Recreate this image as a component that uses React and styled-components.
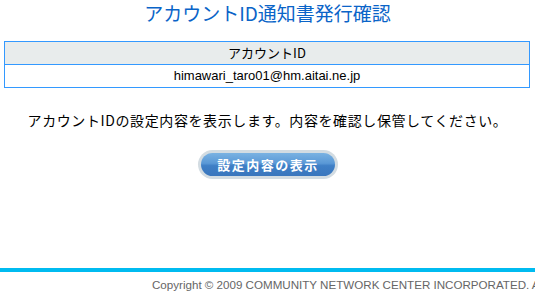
import React from "react";
import styled, { createGlobalStyle } from "styled-components";

const Global = createGlobalStyle`
  html, body { margin: 0; padding: 0; background: #fff; overflow: hidden; }
  body { font-family: "Liberation Sans", "Noto Sans CJK JP", sans-serif; color: #000; }
`;

const Page = styled.div`
  width: 535px;
  height: 299px;
  display: flex;
  flex-direction: column;
  overflow: hidden;
`;

const Title = styled.h1`
  margin: 0;
  padding-top: 1px;
  height: 41px;
  box-sizing: border-box;
  text-align: center;
  font-size: 19px;
  line-height: 24px;
  font-weight: normal;
  color: #0a64c8;
  font-family: "Noto Sans CJK JP", sans-serif;
`;

const InfoTable = styled.table`
  margin: 0 5px 0 4px;
  width: 526px;
  border-collapse: collapse;
  border: 1px solid #3399ff;
  font-size: 13px;
`;

const Cell = styled.td`
  height: 22px;
  padding: 0;
  text-align: center;
  vertical-align: middle;
  border: 1px solid #3399ff;
  background: ${(p) => (p.$head ? "#e8ecec" : "#fff")};
  font-family: ${(p) => (p.$head ? '"Noto Sans CJK JP", sans-serif' : '"Liberation Sans", "Noto Sans CJK JP", sans-serif')};
  line-height: 22px;
`;

const Message = styled.p`
  margin: 22px 0 0;
  text-align: center;
  font-size: 14px;
  letter-spacing: 0.6px;
  line-height: 20px;
  font-family: "Noto Sans CJK JP", sans-serif;
`;

const ButtonRow = styled.div`
  display: flex;
  justify-content: center;
  margin-top: 20px;
  padding-left: 1px;
`;

const Ring = styled.div`
  width: 140px;
  height: 29px;
  box-sizing: border-box;
  border-radius: 15px;
  padding: 3px;
  background: #d3dce2;
  display: flex;
`;

const ShowButton = styled.button`
  flex: 1;
  border: none;
  border-radius: 12px;
  padding: 0;
  background: linear-gradient(#7ab2e2 0%, #5a98d6 45%, #3f7fc6 55%, #3a76bd 100%);
  color: #fff;
  font-weight: bold;
  font-size: 13px;
  letter-spacing: 1.5px;
  font-family: "Noto Sans CJK JP", sans-serif;
  line-height: 23px;
  cursor: pointer;
`;

const Spacer = styled.div`
  flex: 1;
`;

const Footer = styled.footer`
  border-top: 4px solid #00bbf0;
  height: 31px;
  flex-shrink: 0;
  box-sizing: border-box;
  padding: 6px 0 0 152px;
  white-space: nowrap;
  font-size: 11.6px;
  line-height: 14px;
  color: #666;
  font-family: "Liberation Sans", sans-serif;
`;

export default function App() {
  return (
    <>
      <Global />
      <Page>
        <Title>アカウントID通知書発行確認</Title>
        <InfoTable>
          <tbody>
            <tr>
              <Cell $head>アカウントID</Cell>
            </tr>
            <tr>
              <Cell>himawari_taro01@hm.aitai.ne.jp</Cell>
            </tr>
          </tbody>
        </InfoTable>
        <Message>アカウントIDの設定内容を表示します。内容を確認し保管してください。</Message>
        <ButtonRow>
          <Ring>
            <ShowButton>設定内容の表示</ShowButton>
          </Ring>
        </ButtonRow>
        <Spacer />
        <Footer>Copyright © 2009 COMMUNITY NETWORK CENTER INCORPORATED. All Rights Reserved.</Footer>
      </Page>
    </>
  );
}
